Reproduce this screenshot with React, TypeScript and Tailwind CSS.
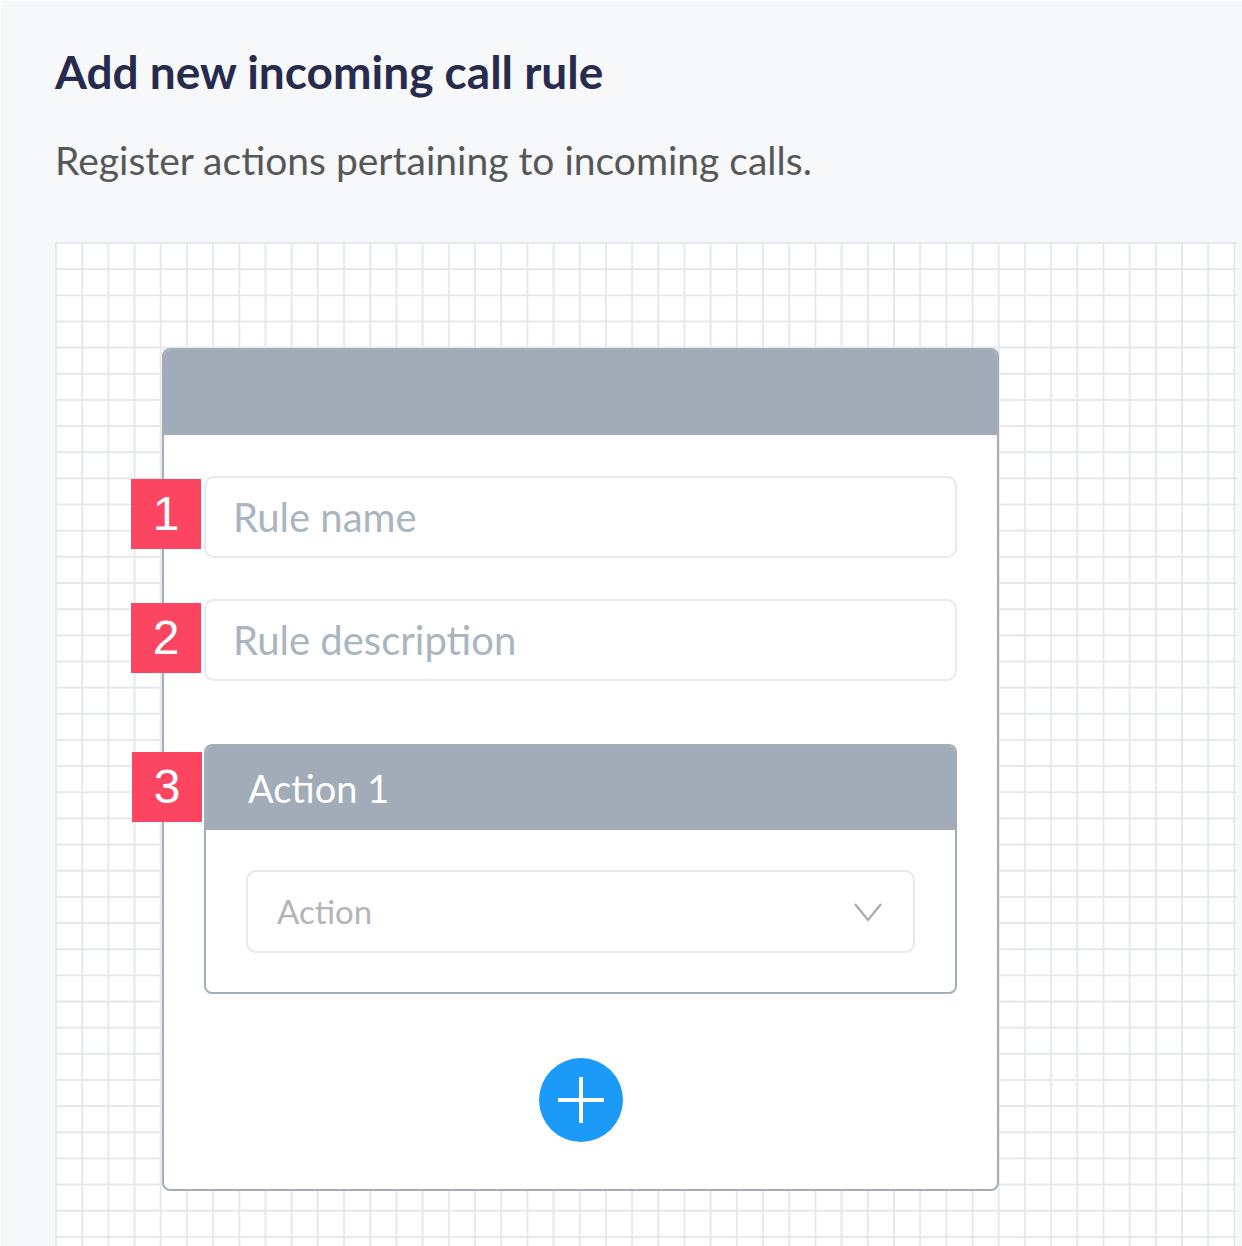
function Badge({ n, className }: { n: string; className: string }) {
  return (
    <div
      className={`absolute w-[70px] h-[70px] bg-[#fc4661] text-white flex items-center justify-center text-[48px] leading-none font-['Liberation_Sans',sans-serif] ${className}`}
    >
      {n}
    </div>
  )
}

export default function App() {
  return (
    <div className="w-full h-[1246px] overflow-hidden bg-[#f7f8fa] border-t border-l border-white font-['Lato',sans-serif]">
      <div className="pl-[54px] pt-[43px]">
        <h1 className="text-[46px] leading-[56px] font-bold text-[#272b4d]">Add new incoming call rule</h1>
        <p className="mt-[36px] text-[39px] leading-[48px] text-[#555759]">Register actions pertaining to incoming calls.</p>

        {/* grid canvas */}
        <div className="mt-[58px] mr-[5px] h-[1020px] pt-[106px] pl-[107px] bg-white bg-[linear-gradient(to_right,#e5e8ed_2px,transparent_2px),linear-gradient(to_bottom,#e5e8ed_2px,transparent_2px)] bg-[size:26.2px_26.16px]">
          <div className="relative w-[837px] h-[843px] bg-white border-2 border-[#a3aeba] rounded-[8px] flex flex-col">
            <div className="h-[85px] bg-[#a1acb8] rounded-t-[6px] shrink-0" />
            <div className="px-[40px] pt-[41px] flex flex-col">
              <div className="relative">
                <Badge n="1" className="top-[3px] left-[-73px]" />
                <div className="h-[82px] border-2 border-[#e6e9ed] rounded-[10px] flex items-center pl-[27px] text-[40px] text-[#a9b5c0]">Rule name</div>
              </div>
              <div className="relative mt-[41px]">
                <Badge n="2" className="top-[4px] left-[-73px]" />
                <div className="h-[82px] border-2 border-[#e6e9ed] rounded-[10px] flex items-center pl-[27px] text-[40px] text-[#a9b5c0]">Rule description</div>
              </div>
              <div className="relative mt-[63px]">
                <Badge n="3" className="top-[8px] left-[-72px]" />
                <div className="h-[250px] border-2 border-[#a3aeba] rounded-[8px] flex flex-col">
                  <div className="h-[84px] bg-[#a1acb8] rounded-t-[6px] flex items-center pl-[42px] text-[38px] text-white">Action 1</div>
                  <div className="px-[40px] pt-[40px]">
                    <div className="h-[83px] border-2 border-[#e6e9ed] rounded-[10px] flex items-center justify-between pl-[29px] pr-[30px] text-[33px] text-[#b3b5b7]">
                      <span>Action</span>
                      <svg width="30" height="20" viewBox="0 0 30 20" fill="none" stroke="#a9abad" strokeWidth="2.2">
                        <polyline points="2,2 15,18 28,2" />
                      </svg>
                    </div>
                  </div>
                </div>
              </div>
              <div className="flex justify-center mt-[64px]">
                <button className="w-[84px] h-[84px] rounded-full bg-[#1b9af7] flex items-center justify-center">
                  <svg width="48" height="48" viewBox="0 0 48 48" stroke="white" strokeWidth="4">
                    <line x1="1" y1="24" x2="47" y2="24" />
                    <line x1="24" y1="1" x2="24" y2="47" />
                  </svg>
                </button>
              </div>
            </div>
          </div>
        </div>
      </div>
    </div>
  )
}
